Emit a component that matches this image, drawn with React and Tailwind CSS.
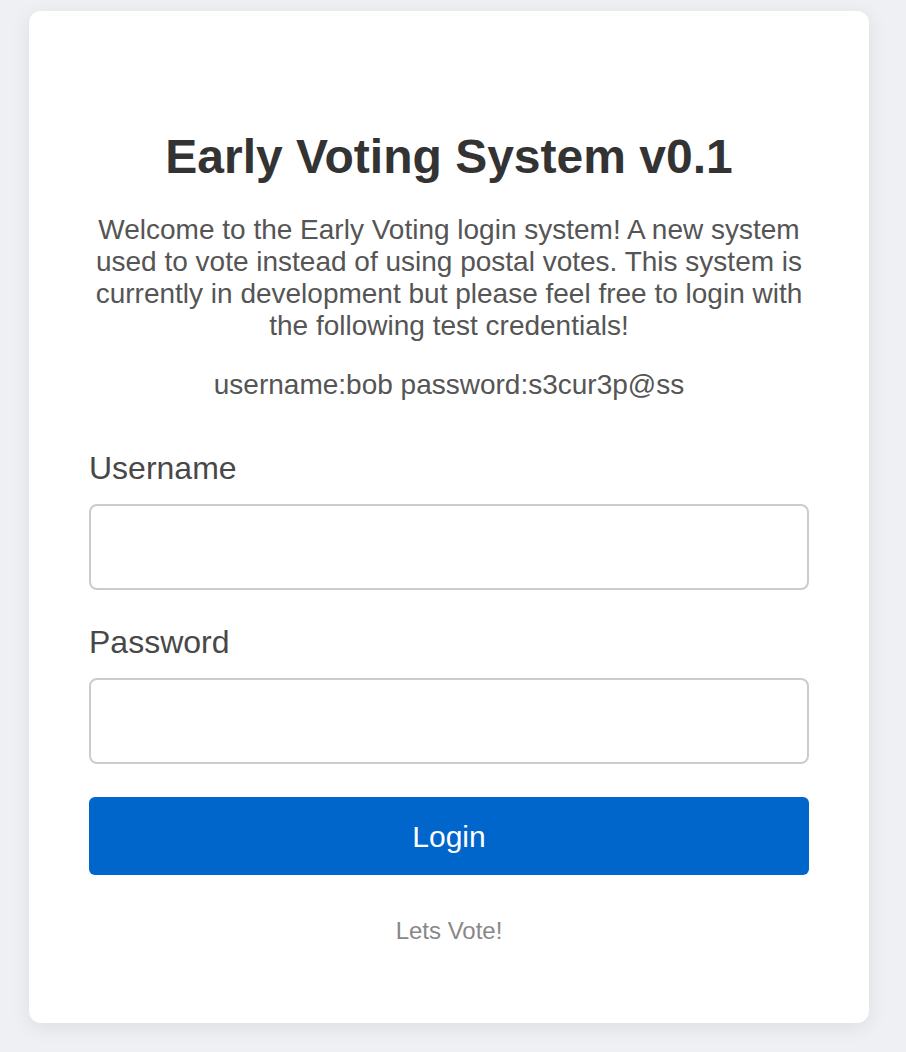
import React from "react";

function Field({ label, type }) {
  return (
    <div className="flex flex-col">
      <label className="text-[32px] leading-[37px] text-[#484848]">{label}</label>
      <input
        type={type}
        className="mt-[17px] h-[86px] w-full rounded-[8px] border-2 border-[#ccc] bg-white px-4 text-[28px] outline-none"
      />
    </div>
  );
}

export default function App() {
  return (
    <div
      className="min-h-screen bg-[#eef0f4] pl-[29px] pt-[11px] pb-[28px]"
      style={{ fontFamily: '"Liberation Sans", Arial, sans-serif' }}
    >
      <div className="w-[840px] rounded-[12px] bg-white px-[60px] pt-[118px] pb-[78px] shadow-[0_4px_20px_rgba(0,0,0,0.08)]">
        <h1 className="text-center text-[48px] font-bold leading-[55px] text-[#333]">
          Early Voting System v0.1
        </h1>
        <p className="mt-[30px] text-center text-[28px] leading-[32px] text-[#555]">
          Welcome to the Early Voting login system! A new system used to vote
          instead of using postal votes. This system is currently in
          development but please feel free to login with the following test
          credentials!
        </p>
        <p className="mt-[27px] text-center text-[28px] leading-[32px] text-[#555]">
          username:bob password:s3cur3p@ss
        </p>

        <form className="mt-[49px] flex flex-col" onSubmit={(e) => e.preventDefault()}>
          <Field label="Username" type="text" />
          <div className="mt-[34px]">
            <Field label="Password" type="password" />
          </div>
          <button
            type="submit"
            className="mt-[33px] h-[78px] w-full rounded-[6px] bg-[#0066cc] text-[30px] text-white"
          >
            Login
          </button>
        </form>

        <p className="mt-[42px] text-center text-[24px] leading-[28px] text-[#888]">
          Lets Vote!
        </p>
      </div>
    </div>
  );
}
